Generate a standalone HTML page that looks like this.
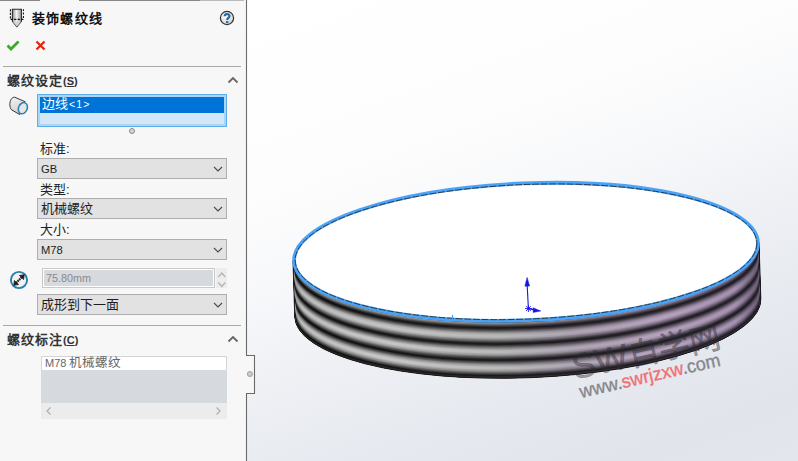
<!DOCTYPE html>
<html lang="zh-CN">
<head>
<meta charset="utf-8">
<style>
*{margin:0;padding:0;box-sizing:border-box}
html,body{width:798px;height:461px;overflow:hidden}
body{position:relative;font-family:"Liberation Sans",sans-serif;background:#f7f7f7}
.abs{position:absolute}
#view{position:absolute;left:247px;top:0;width:551px;height:461px;background:linear-gradient(160deg,#ffffff 0%,#fdfdfd 30%,#f7f8fa 45%,#eff1f5 58%,#e6e9ef 76%,#e1e4eb 90%,#e4e6ed 100%)}
#panel{position:absolute;left:0;top:0;width:247px;height:461px;background:#f7f7f7}
.txt{position:absolute;white-space:nowrap;color:#222;line-height:1}
.sep{position:absolute;height:1px;background:#a9a9a9}
.dd{position:absolute;left:37px;width:190px;height:21px;background:#e2e2e2;border:1px solid #adadad}
.dd .t{position:absolute;left:3px;top:3px;font-size:13px;color:#1e1e1e;line-height:1}
.chev{position:absolute;right:3px;top:7px;width:10px;height:6px}
</style>
</head>
<body>
<div id="view"></div>
<svg class="abs" style="left:247px;top:0" width="551" height="461" viewBox="0 0 551 461">
<defs>
<clipPath id="sc"><path d="M45.98,261.08 A233.2,69.89999999999999 -2.28 0 0 512.02,242.52 L513.82,298.52 A233.2,69.89999999999999 -2.28 0 1 47.78,317.08 Z"/></clipPath>
<linearGradient id="g0" gradientUnits="userSpaceOnUse" x1="45.98" y1="0" x2="512.02" y2="0">
<stop offset="0.000" stop-color="#0a0a0a"/>
<stop offset="0.020" stop-color="#0b0b0b"/>
<stop offset="0.100" stop-color="#0e0e0e"/>
<stop offset="0.200" stop-color="#121212"/>
<stop offset="0.300" stop-color="#161616"/>
<stop offset="0.400" stop-color="#181719"/>
<stop offset="0.450" stop-color="#19181a"/>
<stop offset="0.500" stop-color="#1a181b"/>
<stop offset="0.600" stop-color="#1c191e"/>
<stop offset="0.700" stop-color="#1d1a20"/>
<stop offset="0.800" stop-color="#1e1b21"/>
<stop offset="0.850" stop-color="#1e1b22"/>
<stop offset="0.900" stop-color="#1e1b22"/>
<stop offset="0.950" stop-color="#1e1a22"/>
<stop offset="1.000" stop-color="#1e1a22"/>
</linearGradient>
<linearGradient id="g1" gradientUnits="userSpaceOnUse" x1="45.98" y1="0" x2="512.02" y2="0">
<stop offset="0.000" stop-color="#101010"/>
<stop offset="0.020" stop-color="#121212"/>
<stop offset="0.100" stop-color="#151515"/>
<stop offset="0.200" stop-color="#1a1a1a"/>
<stop offset="0.300" stop-color="#1d1d1d"/>
<stop offset="0.400" stop-color="#1f1e1f"/>
<stop offset="0.450" stop-color="#201e21"/>
<stop offset="0.500" stop-color="#201e22"/>
<stop offset="0.600" stop-color="#221f24"/>
<stop offset="0.700" stop-color="#232026"/>
<stop offset="0.800" stop-color="#242028"/>
<stop offset="0.850" stop-color="#242028"/>
<stop offset="0.900" stop-color="#242028"/>
<stop offset="0.950" stop-color="#241f28"/>
<stop offset="1.000" stop-color="#211d25"/>
</linearGradient>
<linearGradient id="g2" gradientUnits="userSpaceOnUse" x1="45.98" y1="0" x2="512.02" y2="0">
<stop offset="0.000" stop-color="#161616"/>
<stop offset="0.020" stop-color="#1a1a1a"/>
<stop offset="0.100" stop-color="#1d1d1d"/>
<stop offset="0.200" stop-color="#212121"/>
<stop offset="0.300" stop-color="#242424"/>
<stop offset="0.400" stop-color="#262526"/>
<stop offset="0.450" stop-color="#262527"/>
<stop offset="0.500" stop-color="#272528"/>
<stop offset="0.600" stop-color="#28252a"/>
<stop offset="0.700" stop-color="#29252c"/>
<stop offset="0.800" stop-color="#2a262e"/>
<stop offset="0.850" stop-color="#2a262f"/>
<stop offset="0.900" stop-color="#2a252e"/>
<stop offset="0.950" stop-color="#29242e"/>
<stop offset="1.000" stop-color="#242029"/>
</linearGradient>
<linearGradient id="g3" gradientUnits="userSpaceOnUse" x1="45.98" y1="0" x2="512.02" y2="0">
<stop offset="0.000" stop-color="#1c1c1c"/>
<stop offset="0.020" stop-color="#212121"/>
<stop offset="0.100" stop-color="#242424"/>
<stop offset="0.200" stop-color="#282828"/>
<stop offset="0.300" stop-color="#2b2b2b"/>
<stop offset="0.400" stop-color="#2c2c2d"/>
<stop offset="0.450" stop-color="#2d2c2e"/>
<stop offset="0.500" stop-color="#2d2b2f"/>
<stop offset="0.600" stop-color="#2e2a31"/>
<stop offset="0.700" stop-color="#302b33"/>
<stop offset="0.800" stop-color="#312c35"/>
<stop offset="0.850" stop-color="#302b35"/>
<stop offset="0.900" stop-color="#302a34"/>
<stop offset="0.950" stop-color="#2f2934"/>
<stop offset="1.000" stop-color="#27222c"/>
</linearGradient>
<linearGradient id="g4" gradientUnits="userSpaceOnUse" x1="45.98" y1="0" x2="512.02" y2="0">
<stop offset="0.000" stop-color="#212121"/>
<stop offset="0.020" stop-color="#292929"/>
<stop offset="0.100" stop-color="#2c2c2c"/>
<stop offset="0.200" stop-color="#303030"/>
<stop offset="0.300" stop-color="#323232"/>
<stop offset="0.400" stop-color="#333234"/>
<stop offset="0.450" stop-color="#343234"/>
<stop offset="0.500" stop-color="#343235"/>
<stop offset="0.600" stop-color="#343037"/>
<stop offset="0.700" stop-color="#363139"/>
<stop offset="0.800" stop-color="#37313b"/>
<stop offset="0.850" stop-color="#36313b"/>
<stop offset="0.900" stop-color="#352f3a"/>
<stop offset="0.950" stop-color="#342e3a"/>
<stop offset="1.000" stop-color="#2a2530"/>
</linearGradient>
<linearGradient id="g5" gradientUnits="userSpaceOnUse" x1="45.98" y1="0" x2="512.02" y2="0">
<stop offset="0.000" stop-color="#272727"/>
<stop offset="0.020" stop-color="#303030"/>
<stop offset="0.100" stop-color="#333333"/>
<stop offset="0.200" stop-color="#383838"/>
<stop offset="0.300" stop-color="#3a3a3a"/>
<stop offset="0.400" stop-color="#3a393b"/>
<stop offset="0.450" stop-color="#3a393b"/>
<stop offset="0.500" stop-color="#3a383c"/>
<stop offset="0.600" stop-color="#3b363d"/>
<stop offset="0.700" stop-color="#3c3640"/>
<stop offset="0.800" stop-color="#3d3742"/>
<stop offset="0.850" stop-color="#3c3642"/>
<stop offset="0.900" stop-color="#3b3541"/>
<stop offset="0.950" stop-color="#3a3340"/>
<stop offset="1.000" stop-color="#2e2833"/>
</linearGradient>
<linearGradient id="g6" gradientUnits="userSpaceOnUse" x1="45.98" y1="0" x2="512.02" y2="0">
<stop offset="0.000" stop-color="#2d2d2d"/>
<stop offset="0.020" stop-color="#383838"/>
<stop offset="0.100" stop-color="#3b3b3b"/>
<stop offset="0.200" stop-color="#3f3f3f"/>
<stop offset="0.300" stop-color="#414141"/>
<stop offset="0.400" stop-color="#414041"/>
<stop offset="0.450" stop-color="#414042"/>
<stop offset="0.500" stop-color="#413f42"/>
<stop offset="0.600" stop-color="#413c44"/>
<stop offset="0.700" stop-color="#423c46"/>
<stop offset="0.800" stop-color="#443c48"/>
<stop offset="0.850" stop-color="#433b48"/>
<stop offset="0.900" stop-color="#413a47"/>
<stop offset="0.950" stop-color="#403846"/>
<stop offset="1.000" stop-color="#312a36"/>
</linearGradient>
<linearGradient id="g7" gradientUnits="userSpaceOnUse" x1="45.98" y1="0" x2="512.02" y2="0">
<stop offset="0.000" stop-color="#333333"/>
<stop offset="0.020" stop-color="#3f3f3f"/>
<stop offset="0.100" stop-color="#424242"/>
<stop offset="0.200" stop-color="#464646"/>
<stop offset="0.300" stop-color="#484848"/>
<stop offset="0.400" stop-color="#484748"/>
<stop offset="0.450" stop-color="#484748"/>
<stop offset="0.500" stop-color="#474549"/>
<stop offset="0.600" stop-color="#47424a"/>
<stop offset="0.700" stop-color="#48424c"/>
<stop offset="0.800" stop-color="#4a424f"/>
<stop offset="0.850" stop-color="#49414e"/>
<stop offset="0.900" stop-color="#473f4d"/>
<stop offset="0.950" stop-color="#453d4b"/>
<stop offset="1.000" stop-color="#342d3a"/>
</linearGradient>
<linearGradient id="g8" gradientUnits="userSpaceOnUse" x1="45.98" y1="0" x2="512.02" y2="0">
<stop offset="0.000" stop-color="#393939"/>
<stop offset="0.020" stop-color="#474747"/>
<stop offset="0.100" stop-color="#4a4a4a"/>
<stop offset="0.200" stop-color="#4e4e4e"/>
<stop offset="0.300" stop-color="#4f4f4f"/>
<stop offset="0.400" stop-color="#4f4e4f"/>
<stop offset="0.450" stop-color="#4e4d4f"/>
<stop offset="0.500" stop-color="#4e4b4f"/>
<stop offset="0.600" stop-color="#4d4850"/>
<stop offset="0.700" stop-color="#4f4853"/>
<stop offset="0.800" stop-color="#504855"/>
<stop offset="0.850" stop-color="#4f4654"/>
<stop offset="0.900" stop-color="#4d4453"/>
<stop offset="0.950" stop-color="#4b4251"/>
<stop offset="1.000" stop-color="#37303d"/>
</linearGradient>
<linearGradient id="g9" gradientUnits="userSpaceOnUse" x1="45.98" y1="0" x2="512.02" y2="0">
<stop offset="0.000" stop-color="#3e3e3e"/>
<stop offset="0.020" stop-color="#4e4e4e"/>
<stop offset="0.100" stop-color="#515151"/>
<stop offset="0.200" stop-color="#565656"/>
<stop offset="0.300" stop-color="#565656"/>
<stop offset="0.400" stop-color="#555556"/>
<stop offset="0.450" stop-color="#555456"/>
<stop offset="0.500" stop-color="#545256"/>
<stop offset="0.600" stop-color="#534e56"/>
<stop offset="0.700" stop-color="#554d59"/>
<stop offset="0.800" stop-color="#574d5c"/>
<stop offset="0.850" stop-color="#554c5b"/>
<stop offset="0.900" stop-color="#534959"/>
<stop offset="0.950" stop-color="#514757"/>
<stop offset="1.000" stop-color="#3a3340"/>
</linearGradient>
<linearGradient id="g10" gradientUnits="userSpaceOnUse" x1="45.98" y1="0" x2="512.02" y2="0">
<stop offset="0.000" stop-color="#444444"/>
<stop offset="0.020" stop-color="#555555"/>
<stop offset="0.100" stop-color="#595959"/>
<stop offset="0.200" stop-color="#5d5d5d"/>
<stop offset="0.300" stop-color="#5d5d5d"/>
<stop offset="0.400" stop-color="#5c5c5d"/>
<stop offset="0.450" stop-color="#5c5b5c"/>
<stop offset="0.500" stop-color="#5b585c"/>
<stop offset="0.600" stop-color="#59535c"/>
<stop offset="0.700" stop-color="#5b5360"/>
<stop offset="0.800" stop-color="#5d5363"/>
<stop offset="0.850" stop-color="#5b5161"/>
<stop offset="0.900" stop-color="#594f5f"/>
<stop offset="0.950" stop-color="#564c5d"/>
<stop offset="1.000" stop-color="#3d3644"/>
</linearGradient>
<linearGradient id="g11" gradientUnits="userSpaceOnUse" x1="45.98" y1="0" x2="512.02" y2="0">
<stop offset="0.000" stop-color="#4a4a4a"/>
<stop offset="0.020" stop-color="#5d5d5d"/>
<stop offset="0.100" stop-color="#606060"/>
<stop offset="0.200" stop-color="#646464"/>
<stop offset="0.300" stop-color="#646464"/>
<stop offset="0.400" stop-color="#636263"/>
<stop offset="0.450" stop-color="#626263"/>
<stop offset="0.500" stop-color="#615f63"/>
<stop offset="0.600" stop-color="#5f5963"/>
<stop offset="0.700" stop-color="#615966"/>
<stop offset="0.800" stop-color="#635969"/>
<stop offset="0.850" stop-color="#615667"/>
<stop offset="0.900" stop-color="#5e5465"/>
<stop offset="0.950" stop-color="#5c5163"/>
<stop offset="1.000" stop-color="#403847"/>
</linearGradient>
<linearGradient id="g12" gradientUnits="userSpaceOnUse" x1="45.98" y1="0" x2="512.02" y2="0">
<stop offset="0.000" stop-color="#505050"/>
<stop offset="0.020" stop-color="#646464"/>
<stop offset="0.100" stop-color="#686868"/>
<stop offset="0.200" stop-color="#6c6c6c"/>
<stop offset="0.300" stop-color="#6b6b6b"/>
<stop offset="0.400" stop-color="#6a696a"/>
<stop offset="0.450" stop-color="#69686a"/>
<stop offset="0.500" stop-color="#686569"/>
<stop offset="0.600" stop-color="#665f69"/>
<stop offset="0.700" stop-color="#685f6c"/>
<stop offset="0.800" stop-color="#6a5e70"/>
<stop offset="0.850" stop-color="#675c6e"/>
<stop offset="0.900" stop-color="#64596b"/>
<stop offset="0.950" stop-color="#625669"/>
<stop offset="1.000" stop-color="#443b4a"/>
</linearGradient>
<linearGradient id="g13" gradientUnits="userSpaceOnUse" x1="45.98" y1="0" x2="512.02" y2="0">
<stop offset="0.000" stop-color="#565656"/>
<stop offset="0.020" stop-color="#6c6c6c"/>
<stop offset="0.100" stop-color="#6f6f6f"/>
<stop offset="0.200" stop-color="#747474"/>
<stop offset="0.300" stop-color="#737373"/>
<stop offset="0.400" stop-color="#717071"/>
<stop offset="0.450" stop-color="#706f70"/>
<stop offset="0.500" stop-color="#6e6c70"/>
<stop offset="0.600" stop-color="#6c656f"/>
<stop offset="0.700" stop-color="#6e6473"/>
<stop offset="0.800" stop-color="#706476"/>
<stop offset="0.850" stop-color="#6d6174"/>
<stop offset="0.900" stop-color="#6a5e71"/>
<stop offset="0.950" stop-color="#675b6f"/>
<stop offset="1.000" stop-color="#473e4e"/>
</linearGradient>
<linearGradient id="g14" gradientUnits="userSpaceOnUse" x1="45.98" y1="0" x2="512.02" y2="0">
<stop offset="0.000" stop-color="#5c5c5c"/>
<stop offset="0.020" stop-color="#737373"/>
<stop offset="0.100" stop-color="#777777"/>
<stop offset="0.200" stop-color="#7b7b7b"/>
<stop offset="0.300" stop-color="#7a7a7a"/>
<stop offset="0.400" stop-color="#777778"/>
<stop offset="0.450" stop-color="#767677"/>
<stop offset="0.500" stop-color="#757276"/>
<stop offset="0.600" stop-color="#726b76"/>
<stop offset="0.700" stop-color="#746a79"/>
<stop offset="0.800" stop-color="#766a7d"/>
<stop offset="0.850" stop-color="#73677a"/>
<stop offset="0.900" stop-color="#706378"/>
<stop offset="0.950" stop-color="#6d6075"/>
<stop offset="1.000" stop-color="#4a4051"/>
</linearGradient>
<linearGradient id="g15" gradientUnits="userSpaceOnUse" x1="45.98" y1="0" x2="512.02" y2="0">
<stop offset="0.000" stop-color="#626262"/>
<stop offset="0.020" stop-color="#7b7b7b"/>
<stop offset="0.100" stop-color="#7e7e7e"/>
<stop offset="0.200" stop-color="#828282"/>
<stop offset="0.300" stop-color="#818181"/>
<stop offset="0.400" stop-color="#7e7e7f"/>
<stop offset="0.450" stop-color="#7d7c7d"/>
<stop offset="0.500" stop-color="#7b787d"/>
<stop offset="0.600" stop-color="#78707c"/>
<stop offset="0.700" stop-color="#7a707f"/>
<stop offset="0.800" stop-color="#7d6f83"/>
<stop offset="0.850" stop-color="#796c81"/>
<stop offset="0.900" stop-color="#76697e"/>
<stop offset="0.950" stop-color="#72657b"/>
<stop offset="1.000" stop-color="#4d4355"/>
</linearGradient>
<linearGradient id="g16" gradientUnits="userSpaceOnUse" x1="45.98" y1="0" x2="512.02" y2="0">
<stop offset="0.000" stop-color="#676767"/>
<stop offset="0.020" stop-color="#828282"/>
<stop offset="0.100" stop-color="#868686"/>
<stop offset="0.200" stop-color="#8a8a8a"/>
<stop offset="0.300" stop-color="#888888"/>
<stop offset="0.400" stop-color="#858585"/>
<stop offset="0.450" stop-color="#848384"/>
<stop offset="0.500" stop-color="#827f83"/>
<stop offset="0.600" stop-color="#7e7682"/>
<stop offset="0.700" stop-color="#817686"/>
<stop offset="0.800" stop-color="#83758a"/>
<stop offset="0.850" stop-color="#807187"/>
<stop offset="0.900" stop-color="#7c6e84"/>
<stop offset="0.950" stop-color="#786a81"/>
<stop offset="1.000" stop-color="#504658"/>
</linearGradient>
<linearGradient id="g17" gradientUnits="userSpaceOnUse" x1="45.98" y1="0" x2="512.02" y2="0">
<stop offset="0.000" stop-color="#6d6d6d"/>
<stop offset="0.020" stop-color="#8a8a8a"/>
<stop offset="0.100" stop-color="#8d8d8d"/>
<stop offset="0.200" stop-color="#929292"/>
<stop offset="0.300" stop-color="#8f8f8f"/>
<stop offset="0.400" stop-color="#8c8c8c"/>
<stop offset="0.450" stop-color="#8a8a8b"/>
<stop offset="0.500" stop-color="#88858a"/>
<stop offset="0.600" stop-color="#847c88"/>
<stop offset="0.700" stop-color="#877b8c"/>
<stop offset="0.800" stop-color="#8a7b90"/>
<stop offset="0.850" stop-color="#86778d"/>
<stop offset="0.900" stop-color="#82738a"/>
<stop offset="0.950" stop-color="#7e6f87"/>
<stop offset="1.000" stop-color="#53495b"/>
</linearGradient>
<linearGradient id="g18" gradientUnits="userSpaceOnUse" x1="45.98" y1="0" x2="512.02" y2="0">
<stop offset="0.000" stop-color="#737373"/>
<stop offset="0.020" stop-color="#919191"/>
<stop offset="0.100" stop-color="#959595"/>
<stop offset="0.200" stop-color="#999999"/>
<stop offset="0.300" stop-color="#969696"/>
<stop offset="0.400" stop-color="#939293"/>
<stop offset="0.450" stop-color="#919191"/>
<stop offset="0.500" stop-color="#8f8c90"/>
<stop offset="0.600" stop-color="#8a828e"/>
<stop offset="0.700" stop-color="#8d8193"/>
<stop offset="0.800" stop-color="#908097"/>
<stop offset="0.850" stop-color="#8c7c94"/>
<stop offset="0.900" stop-color="#887890"/>
<stop offset="0.950" stop-color="#83748c"/>
<stop offset="1.000" stop-color="#564c5f"/>
</linearGradient>
<linearGradient id="g19" gradientUnits="userSpaceOnUse" x1="45.98" y1="0" x2="512.02" y2="0">
<stop offset="0.000" stop-color="#797979"/>
<stop offset="0.020" stop-color="#999999"/>
<stop offset="0.100" stop-color="#9c9c9c"/>
<stop offset="0.200" stop-color="#a0a0a0"/>
<stop offset="0.300" stop-color="#9d9d9d"/>
<stop offset="0.400" stop-color="#9a999a"/>
<stop offset="0.450" stop-color="#989798"/>
<stop offset="0.500" stop-color="#959297"/>
<stop offset="0.600" stop-color="#908895"/>
<stop offset="0.700" stop-color="#938799"/>
<stop offset="0.800" stop-color="#96869d"/>
<stop offset="0.850" stop-color="#92829a"/>
<stop offset="0.900" stop-color="#8d7d96"/>
<stop offset="0.950" stop-color="#897992"/>
<stop offset="1.000" stop-color="#594e62"/>
</linearGradient>
<linearGradient id="g20" gradientUnits="userSpaceOnUse" x1="45.98" y1="0" x2="512.02" y2="0">
<stop offset="0.000" stop-color="#7f7f7f"/>
<stop offset="0.020" stop-color="#a0a0a0"/>
<stop offset="0.100" stop-color="#a4a4a4"/>
<stop offset="0.200" stop-color="#a8a8a8"/>
<stop offset="0.300" stop-color="#a4a4a4"/>
<stop offset="0.400" stop-color="#a0a0a0"/>
<stop offset="0.450" stop-color="#9e9e9e"/>
<stop offset="0.500" stop-color="#9c999d"/>
<stop offset="0.600" stop-color="#968e9b"/>
<stop offset="0.700" stop-color="#9a8d9f"/>
<stop offset="0.800" stop-color="#9d8ba4"/>
<stop offset="0.850" stop-color="#9887a0"/>
<stop offset="0.900" stop-color="#93839c"/>
<stop offset="0.950" stop-color="#8e7e98"/>
<stop offset="1.000" stop-color="#5c5166"/>
</linearGradient>
<linearGradient id="g21" gradientUnits="userSpaceOnUse" x1="45.98" y1="0" x2="512.02" y2="0">
<stop offset="0.000" stop-color="#848484"/>
<stop offset="0.020" stop-color="#a8a8a8"/>
<stop offset="0.100" stop-color="#ababab"/>
<stop offset="0.200" stop-color="#b0b0b0"/>
<stop offset="0.300" stop-color="#ababab"/>
<stop offset="0.400" stop-color="#a7a7a7"/>
<stop offset="0.450" stop-color="#a5a5a5"/>
<stop offset="0.500" stop-color="#a29fa4"/>
<stop offset="0.600" stop-color="#9d94a1"/>
<stop offset="0.700" stop-color="#a092a6"/>
<stop offset="0.800" stop-color="#a391aa"/>
<stop offset="0.850" stop-color="#9e8ca6"/>
<stop offset="0.900" stop-color="#9988a2"/>
<stop offset="0.950" stop-color="#94839e"/>
<stop offset="1.000" stop-color="#605469"/>
</linearGradient>
<linearGradient id="g22" gradientUnits="userSpaceOnUse" x1="45.98" y1="0" x2="512.02" y2="0">
<stop offset="0.000" stop-color="#8a8a8a"/>
<stop offset="0.020" stop-color="#afafaf"/>
<stop offset="0.100" stop-color="#b3b3b3"/>
<stop offset="0.200" stop-color="#b7b7b7"/>
<stop offset="0.300" stop-color="#b3b3b3"/>
<stop offset="0.400" stop-color="#aeaeae"/>
<stop offset="0.450" stop-color="#acacac"/>
<stop offset="0.500" stop-color="#a9a5aa"/>
<stop offset="0.600" stop-color="#a399a8"/>
<stop offset="0.700" stop-color="#a698ac"/>
<stop offset="0.800" stop-color="#a997b1"/>
<stop offset="0.850" stop-color="#a492ad"/>
<stop offset="0.900" stop-color="#9f8da8"/>
<stop offset="0.950" stop-color="#9a88a4"/>
<stop offset="1.000" stop-color="#63566c"/>
</linearGradient>
<linearGradient id="g23" gradientUnits="userSpaceOnUse" x1="45.98" y1="0" x2="512.02" y2="0">
<stop offset="0.000" stop-color="#909090"/>
<stop offset="0.020" stop-color="#b7b7b7"/>
<stop offset="0.100" stop-color="#bababa"/>
<stop offset="0.200" stop-color="#bebebe"/>
<stop offset="0.300" stop-color="#bababa"/>
<stop offset="0.400" stop-color="#b5b5b5"/>
<stop offset="0.450" stop-color="#b2b2b2"/>
<stop offset="0.500" stop-color="#afacb1"/>
<stop offset="0.600" stop-color="#a99fae"/>
<stop offset="0.700" stop-color="#ac9eb3"/>
<stop offset="0.800" stop-color="#b09cb7"/>
<stop offset="0.850" stop-color="#aa97b3"/>
<stop offset="0.900" stop-color="#a592af"/>
<stop offset="0.950" stop-color="#9f8daa"/>
<stop offset="1.000" stop-color="#665970"/>
</linearGradient>
<linearGradient id="g24" gradientUnits="userSpaceOnUse" x1="45.98" y1="0" x2="512.02" y2="0">
<stop offset="0.000" stop-color="#969696"/>
<stop offset="0.020" stop-color="#bebebe"/>
<stop offset="0.100" stop-color="#c2c2c2"/>
<stop offset="0.200" stop-color="#c6c6c6"/>
<stop offset="0.300" stop-color="#c1c1c1"/>
<stop offset="0.400" stop-color="#bcbcbc"/>
<stop offset="0.450" stop-color="#b9b9b9"/>
<stop offset="0.500" stop-color="#b6b2b7"/>
<stop offset="0.600" stop-color="#afa5b4"/>
<stop offset="0.700" stop-color="#b2a4b9"/>
<stop offset="0.800" stop-color="#b6a2be"/>
<stop offset="0.850" stop-color="#b09db9"/>
<stop offset="0.900" stop-color="#ab97b5"/>
<stop offset="0.950" stop-color="#a592b0"/>
<stop offset="1.000" stop-color="#695c73"/>
</linearGradient>
</defs>
<path d="M45.98,261.08 A233.2,69.89999999999999 -2.28 0 0 512.02,242.52 L513.82,298.52 A233.2,69.89999999999999 -2.28 0 1 47.78,317.08 Z" fill="url(#g0)"/>
<g clip-path="url(#sc)" fill="none">
<path d="M45.92,258.98 A233.2,69.89999999999999 -2.28 0 0 511.95,240.42" stroke="url(#g24)" stroke-width="1.6"/>
<path d="M45.94,259.68 A233.2,69.89999999999999 -2.28 0 0 511.97,241.12" stroke="url(#g24)" stroke-width="1.6"/>
<path d="M45.96,260.38 A233.2,69.89999999999999 -2.28 0 0 511.99,241.82" stroke="url(#g23)" stroke-width="1.6"/>
<path d="M45.98,261.08 A233.2,69.89999999999999 -2.28 0 0 512.02,242.52" stroke="url(#g22)" stroke-width="1.6"/>
<path d="M46.01,261.78 A233.2,69.89999999999999 -2.28 0 0 512.04,243.22" stroke="url(#g20)" stroke-width="1.6"/>
<path d="M46.03,262.48 A233.2,69.89999999999999 -2.28 0 0 512.06,243.92" stroke="url(#g18)" stroke-width="1.6"/>
<path d="M46.05,263.18 A233.2,69.89999999999999 -2.28 0 0 512.08,244.62" stroke="url(#g15)" stroke-width="1.6"/>
<path d="M46.07,263.88 A233.2,69.89999999999999 -2.28 0 0 512.11,245.32" stroke="url(#g12)" stroke-width="1.6"/>
<path d="M46.10,264.58 A233.2,69.89999999999999 -2.28 0 0 512.13,246.02" stroke="url(#g9)" stroke-width="1.6"/>
<path d="M46.12,265.28 A233.2,69.89999999999999 -2.28 0 0 512.15,246.72" stroke="url(#g6)" stroke-width="1.6"/>
<path d="M46.14,265.98 A233.2,69.89999999999999 -2.28 0 0 512.17,247.42" stroke="url(#g3)" stroke-width="1.6"/>
<path d="M46.16,266.68 A233.2,69.89999999999999 -2.28 0 0 512.20,248.12" stroke="url(#g1)" stroke-width="1.6"/>
<path d="M46.19,267.38 A233.2,69.89999999999999 -2.28 0 0 512.22,248.82" stroke="url(#g0)" stroke-width="1.6"/>
<path d="M46.21,268.08 A233.2,69.89999999999999 -2.28 0 0 512.24,249.52" stroke="url(#g2)" stroke-width="1.6"/>
<path d="M46.23,268.78 A233.2,69.89999999999999 -2.28 0 0 512.26,250.22" stroke="url(#g4)" stroke-width="1.6"/>
<path d="M46.25,269.48 A233.2,69.89999999999999 -2.28 0 0 512.29,250.92" stroke="url(#g7)" stroke-width="1.6"/>
<path d="M46.28,270.18 A233.2,69.89999999999999 -2.28 0 0 512.31,251.62" stroke="url(#g10)" stroke-width="1.6"/>
<path d="M46.30,270.88 A233.2,69.89999999999999 -2.28 0 0 512.33,252.32" stroke="url(#g13)" stroke-width="1.6"/>
<path d="M46.32,271.58 A233.2,69.89999999999999 -2.28 0 0 512.35,253.02" stroke="url(#g16)" stroke-width="1.6"/>
<path d="M46.34,272.28 A233.2,69.89999999999999 -2.28 0 0 512.38,253.72" stroke="url(#g19)" stroke-width="1.6"/>
<path d="M46.37,272.98 A233.2,69.89999999999999 -2.28 0 0 512.40,254.42" stroke="url(#g21)" stroke-width="1.6"/>
<path d="M46.39,273.68 A233.2,69.89999999999999 -2.28 0 0 512.42,255.12" stroke="url(#g22)" stroke-width="1.6"/>
<path d="M46.41,274.38 A233.2,69.89999999999999 -2.28 0 0 512.44,255.82" stroke="url(#g23)" stroke-width="1.6"/>
<path d="M46.43,275.08 A233.2,69.89999999999999 -2.28 0 0 512.47,256.52" stroke="url(#g24)" stroke-width="1.6"/>
<path d="M46.46,275.78 A233.2,69.89999999999999 -2.28 0 0 512.49,257.22" stroke="url(#g24)" stroke-width="1.6"/>
<path d="M46.48,276.48 A233.2,69.89999999999999 -2.28 0 0 512.51,257.92" stroke="url(#g23)" stroke-width="1.6"/>
<path d="M46.50,277.18 A233.2,69.89999999999999 -2.28 0 0 512.53,258.62" stroke="url(#g22)" stroke-width="1.6"/>
<path d="M46.52,277.88 A233.2,69.89999999999999 -2.28 0 0 512.56,259.32" stroke="url(#g20)" stroke-width="1.6"/>
<path d="M46.55,278.58 A233.2,69.89999999999999 -2.28 0 0 512.58,260.02" stroke="url(#g17)" stroke-width="1.6"/>
<path d="M46.57,279.28 A233.2,69.89999999999999 -2.28 0 0 512.60,260.72" stroke="url(#g15)" stroke-width="1.6"/>
<path d="M46.59,279.98 A233.2,69.89999999999999 -2.28 0 0 512.62,261.42" stroke="url(#g12)" stroke-width="1.6"/>
<path d="M46.61,280.68 A233.2,69.89999999999999 -2.28 0 0 512.65,262.12" stroke="url(#g9)" stroke-width="1.6"/>
<path d="M46.64,281.38 A233.2,69.89999999999999 -2.28 0 0 512.67,262.82" stroke="url(#g6)" stroke-width="1.6"/>
<path d="M46.66,282.08 A233.2,69.89999999999999 -2.28 0 0 512.69,263.52" stroke="url(#g3)" stroke-width="1.6"/>
<path d="M46.68,282.78 A233.2,69.89999999999999 -2.28 0 0 512.71,264.22" stroke="url(#g1)" stroke-width="1.6"/>
<path d="M46.70,283.48 A233.2,69.89999999999999 -2.28 0 0 512.74,264.92" stroke="url(#g0)" stroke-width="1.6"/>
<path d="M46.73,284.18 A233.2,69.89999999999999 -2.28 0 0 512.76,265.62" stroke="url(#g2)" stroke-width="1.6"/>
<path d="M46.75,284.88 A233.2,69.89999999999999 -2.28 0 0 512.78,266.32" stroke="url(#g5)" stroke-width="1.6"/>
<path d="M46.77,285.58 A233.2,69.89999999999999 -2.28 0 0 512.80,267.02" stroke="url(#g8)" stroke-width="1.6"/>
<path d="M46.79,286.28 A233.2,69.89999999999999 -2.28 0 0 512.83,267.72" stroke="url(#g11)" stroke-width="1.6"/>
<path d="M46.82,286.98 A233.2,69.89999999999999 -2.28 0 0 512.85,268.42" stroke="url(#g14)" stroke-width="1.6"/>
<path d="M46.84,287.68 A233.2,69.89999999999999 -2.28 0 0 512.87,269.12" stroke="url(#g16)" stroke-width="1.6"/>
<path d="M46.86,288.38 A233.2,69.89999999999999 -2.28 0 0 512.89,269.82" stroke="url(#g19)" stroke-width="1.6"/>
<path d="M46.88,289.08 A233.2,69.89999999999999 -2.28 0 0 512.92,270.52" stroke="url(#g21)" stroke-width="1.6"/>
<path d="M46.91,289.78 A233.2,69.89999999999999 -2.28 0 0 512.94,271.22" stroke="url(#g23)" stroke-width="1.6"/>
<path d="M46.93,290.48 A233.2,69.89999999999999 -2.28 0 0 512.96,271.92" stroke="url(#g24)" stroke-width="1.6"/>
<path d="M46.95,291.18 A233.2,69.89999999999999 -2.28 0 0 512.98,272.62" stroke="url(#g24)" stroke-width="1.6"/>
<path d="M46.97,291.88 A233.2,69.89999999999999 -2.28 0 0 513.01,273.32" stroke="url(#g24)" stroke-width="1.6"/>
<path d="M47.00,292.58 A233.2,69.89999999999999 -2.28 0 0 513.03,274.02" stroke="url(#g23)" stroke-width="1.6"/>
<path d="M47.02,293.28 A233.2,69.89999999999999 -2.28 0 0 513.05,274.72" stroke="url(#g21)" stroke-width="1.6"/>
<path d="M47.04,293.98 A233.2,69.89999999999999 -2.28 0 0 513.07,275.42" stroke="url(#g20)" stroke-width="1.6"/>
<path d="M47.06,294.68 A233.2,69.89999999999999 -2.28 0 0 513.10,276.12" stroke="url(#g17)" stroke-width="1.6"/>
<path d="M47.09,295.38 A233.2,69.89999999999999 -2.28 0 0 513.12,276.82" stroke="url(#g14)" stroke-width="1.6"/>
<path d="M47.11,296.08 A233.2,69.89999999999999 -2.28 0 0 513.14,277.52" stroke="url(#g11)" stroke-width="1.6"/>
<path d="M47.13,296.78 A233.2,69.89999999999999 -2.28 0 0 513.16,278.22" stroke="url(#g8)" stroke-width="1.6"/>
<path d="M47.15,297.48 A233.2,69.89999999999999 -2.28 0 0 513.19,278.92" stroke="url(#g5)" stroke-width="1.6"/>
<path d="M47.18,298.18 A233.2,69.89999999999999 -2.28 0 0 513.21,279.62" stroke="url(#g3)" stroke-width="1.6"/>
<path d="M47.20,298.88 A233.2,69.89999999999999 -2.28 0 0 513.23,280.32" stroke="url(#g1)" stroke-width="1.6"/>
<path d="M47.22,299.58 A233.2,69.89999999999999 -2.28 0 0 513.25,281.02" stroke="url(#g0)" stroke-width="1.6"/>
<path d="M47.24,300.28 A233.2,69.89999999999999 -2.28 0 0 513.28,281.72" stroke="url(#g2)" stroke-width="1.6"/>
<path d="M47.27,300.98 A233.2,69.89999999999999 -2.28 0 0 513.30,282.42" stroke="url(#g5)" stroke-width="1.6"/>
<path d="M47.29,301.68 A233.2,69.89999999999999 -2.28 0 0 513.32,283.12" stroke="url(#g8)" stroke-width="1.6"/>
<path d="M47.31,302.38 A233.2,69.89999999999999 -2.28 0 0 513.34,283.82" stroke="url(#g11)" stroke-width="1.6"/>
<path d="M47.33,303.08 A233.2,69.89999999999999 -2.28 0 0 513.37,284.52" stroke="url(#g14)" stroke-width="1.6"/>
<path d="M47.36,303.78 A233.2,69.89999999999999 -2.28 0 0 513.39,285.22" stroke="url(#g17)" stroke-width="1.6"/>
<path d="M47.38,304.48 A233.2,69.89999999999999 -2.28 0 0 513.41,285.92" stroke="url(#g19)" stroke-width="1.6"/>
<path d="M47.40,305.18 A233.2,69.89999999999999 -2.28 0 0 513.43,286.62" stroke="url(#g21)" stroke-width="1.6"/>
<path d="M47.42,305.88 A233.2,69.89999999999999 -2.28 0 0 513.46,287.32" stroke="url(#g23)" stroke-width="1.6"/>
<path d="M47.45,306.58 A233.2,69.89999999999999 -2.28 0 0 513.48,288.02" stroke="url(#g24)" stroke-width="1.6"/>
<path d="M47.47,307.28 A233.2,69.89999999999999 -2.28 0 0 513.50,288.72" stroke="url(#g24)" stroke-width="1.6"/>
<path d="M47.49,307.98 A233.2,69.89999999999999 -2.28 0 0 513.52,289.42" stroke="url(#g24)" stroke-width="1.6"/>
<path d="M47.51,308.68 A233.2,69.89999999999999 -2.28 0 0 513.55,290.12" stroke="url(#g23)" stroke-width="1.6"/>
<path d="M47.54,309.38 A233.2,69.89999999999999 -2.28 0 0 513.57,290.82" stroke="url(#g21)" stroke-width="1.6"/>
<path d="M47.56,310.08 A233.2,69.89999999999999 -2.28 0 0 513.59,291.52" stroke="url(#g19)" stroke-width="1.6"/>
<path d="M47.58,310.78 A233.2,69.89999999999999 -2.28 0 0 513.61,292.22" stroke="url(#g17)" stroke-width="1.6"/>
<path d="M47.60,311.48 A233.2,69.89999999999999 -2.28 0 0 513.64,292.92" stroke="url(#g14)" stroke-width="1.6"/>
<path d="M47.63,312.18 A233.2,69.89999999999999 -2.28 0 0 513.66,293.62" stroke="url(#g11)" stroke-width="1.6"/>
<path d="M47.65,312.88 A233.2,69.89999999999999 -2.28 0 0 513.68,294.32" stroke="url(#g8)" stroke-width="1.6"/>
<path d="M47.67,313.58 A233.2,69.89999999999999 -2.28 0 0 513.70,295.02" stroke="url(#g5)" stroke-width="1.6"/>
<path d="M47.69,314.28 A233.2,69.89999999999999 -2.28 0 0 513.73,295.72" stroke="url(#g2)" stroke-width="1.6"/>
<path d="M47.72,314.98 A233.2,69.89999999999999 -2.28 0 0 513.75,296.42" stroke="url(#g0)" stroke-width="1.6"/>
<path d="M47.74,315.68 A233.2,69.89999999999999 -2.28 0 0 513.77,297.12" stroke="url(#g1)" stroke-width="1.6"/>
<path d="M47.76,316.38 A233.2,69.89999999999999 -2.28 0 0 513.79,297.82" stroke="url(#g3)" stroke-width="1.6"/>
<path d="M47.78,317.08 A233.2,69.89999999999999 -2.28 0 0 513.82,298.52" stroke="url(#g5)" stroke-width="1.6"/>
<path d="M47.81,317.78 A233.2,69.89999999999999 -2.28 0 0 513.84,299.22" stroke="url(#g8)" stroke-width="1.6"/>
<path d="M47.83,318.48 A233.2,69.89999999999999 -2.28 0 0 513.86,299.92" stroke="url(#g11)" stroke-width="1.6"/>
<path d="M47.85,319.18 A233.2,69.89999999999999 -2.28 0 0 513.88,300.62" stroke="url(#g14)" stroke-width="1.6"/>
<path d="M47.87,319.88 A233.2,69.89999999999999 -2.28 0 0 513.91,301.32" stroke="url(#g17)" stroke-width="1.6"/>
</g>
<path d="M45.98,261.08 A233.2,69.89999999999999 -2.28 0 0 512.02,242.52 L513.82,298.52 A233.2,69.89999999999999 -2.28 0 1 47.78,317.08 Z" fill="none" stroke="#111" stroke-width="0.9"/>
<ellipse cx="279.00" cy="251.80" rx="232.1" ry="68.39999999999999" transform="rotate(-2.28 279.00 251.80)" fill="#fff" stroke="#4ba3f7" stroke-width="3.8"/>
<ellipse cx="279.00" cy="251.80" rx="231.0" ry="67.3" transform="rotate(-2.28 279.00 251.80)" fill="none" stroke="#222" stroke-width="0.8" stroke-dasharray="7 1.6"/>
<path d="M205.5,314.8 V319.5" stroke="#4ba3f7" stroke-width="1.2"/>
<g fill="#1515e6" stroke="#1515e6">
<path d="M281.40,308.6 L280.10,284" stroke-width="1.1" fill="none"/>
<path d="M280.10,277.4 L277.90,286.2 L282.60,286 Z" stroke-width="0.5"/>
<path d="M281.40,308.6 L287.10,309.6" stroke-width="1.1" fill="none"/>
<path d="M293.80,311 L286.10,307.8 L286.10,312.4 Z" stroke-width="0.5"/>
<path d="M278.00,308.60 L284.80,308.60" stroke-width="0.9" fill="none"/>
<path d="M279.00,306.20 L283.80,311.00" stroke-width="0.9" fill="none"/>
<path d="M281.40,305.20 L281.40,312.00" stroke-width="0.9" fill="none"/>
<path d="M283.80,306.20 L279.00,311.00" stroke-width="0.9" fill="none"/>
</g>
<g transform="translate(328.0,379.5) rotate(-12.5)" font-family="Liberation Sans, sans-serif">
<text x="0" y="0" font-size="35" fill="#2a2a30" fill-opacity="0.42" stroke="#2a2a30" stroke-opacity="0.42" stroke-width="0.6">SW<tspan font-size="31" dx="1">自学网</tspan></text>
</g>
<g transform="translate(334.0,397.5) rotate(-13)" font-family="Liberation Sans, sans-serif">
<text x="0" y="0.5" font-size="18.5" fill="#86868a" stroke="#86868a" stroke-width="0.35" textLength="144" lengthAdjust="spacingAndGlyphs">www.<tspan fill="#f07074" stroke="#f07074">swrjzxw</tspan>.com</text>
</g>
</svg>
<div id="panel">
  <!-- top tab line -->
  <div class="abs" style="left:0;top:0;width:40px;height:1px;background:#888"></div>
  <div class="abs" style="left:79px;top:0;width:121px;height:1px;background:#888"></div>
  <div class="abs" style="left:200px;top:0;width:44px;height:1px;background:#bababa"></div>

  <!-- title icon -->
  <svg class="abs" style="left:5px;top:5px" width="25" height="25" viewBox="0 0 25 25">
    <defs><linearGradient id="gi" x1="0" x2="1"><stop offset="0" stop-color="#8a8a8a"/><stop offset="0.45" stop-color="#f4f4f4"/><stop offset="1" stop-color="#9a9a9a"/></linearGradient></defs>
    <path d="M7.4,4.2 H16.4 V16.4 L11.9,21.6 L7.4,16.4 Z" fill="url(#gi)" stroke="#2a2a2a" stroke-width="1.1"/>
    <path d="M7.6,16.6 L11.9,21.4 L16.2,16.6 Z" fill="#d4d4d4"/>
    <path d="M5.4,4.2 V14.4 H18.4 V4.2" fill="none" stroke="#111" stroke-width="1.1" stroke-dasharray="2.2 1.3"/>
  </svg>
  <div class="txt" style="left:32px;top:12px;font-size:13px;letter-spacing:1.2px;font-weight:bold;color:#111">装饰螺纹线</div>
  <!-- help -->
  <svg class="abs" style="left:219px;top:10px" width="16" height="16" viewBox="0 0 16 16">
    <defs><radialGradient id="hg" cx="0.4" cy="0.35" r="0.7"><stop offset="0" stop-color="#fff"/><stop offset="1" stop-color="#d0d0d0"/></radialGradient></defs>
    <circle cx="8" cy="8" r="6.6" fill="url(#hg)" stroke="#333" stroke-width="1.2"/>
    <path d="M5.7,6.2 C5.6,3.6 10.5,3.4 10.5,5.9 C10.5,7.9 8.2,7.9 8.2,9.9" fill="none" stroke="#1f6ba6" stroke-width="2.1"/><rect x="7.1" y="11" width="2.2" height="2" fill="#1f6ba6"/>
  </svg>
  <!-- ok / cancel -->
  <svg class="abs" style="left:6px;top:39px" width="14" height="12" viewBox="0 0 14 12">
    <path d="M1.5 6.5 L5 10 L12.5 2.5" fill="none" stroke="#3ea82a" stroke-width="2.8"/>
  </svg>
  <svg class="abs" style="left:35px;top:40px" width="11" height="11" viewBox="0 0 11 11">
    <path d="M1.5 1.5 L9.5 9.5 M9.5 1.5 L1.5 9.5" stroke="#e0280e" stroke-width="2.3"/>
  </svg>

  <div class="sep" style="left:3px;top:66px;width:238px"></div>
  <div class="txt" style="left:7px;top:74px;font-size:13px;letter-spacing:1px;font-weight:bold;color:#333">螺纹设定<span style="font-size:11px;font-weight:bold;letter-spacing:0">(<u>S</u>)</span></div>
  <svg class="abs" style="left:227px;top:76px" width="12" height="8" viewBox="0 0 12 8"><path d="M1.5 6.5 L6 2 L10.5 6.5" fill="none" stroke="#666" stroke-width="1.8"/></svg>

  <!-- edge icon -->
  <svg class="abs" style="left:5px;top:92px" width="28" height="28" viewBox="0 0 28 28">
    <defs><linearGradient id="cg" x1="0" y1="0" x2="0.4" y2="1"><stop offset="0" stop-color="#f4f4f4"/><stop offset="1" stop-color="#cfcfcf"/></linearGradient></defs>
    <path d="M9.7,5.2 L20,9.7 L14.6,22.5 L6.7,17.9 C4.2,15.5 4.4,10 6.2,7.2 C7,6 8.2,5.2 9.7,5.2 Z" fill="url(#cg)" stroke="#222" stroke-width="0.9"/>
    <ellipse cx="17.9" cy="16.2" rx="4.3" ry="5.8" transform="rotate(22 17.9 16.2)" fill="#e6e6e6" stroke="#2a7fb0" stroke-width="1.5"/>
  </svg>
  <!-- selection box -->
  <div class="abs" style="left:37px;top:94px;width:190px;height:33px;background:#5daeea"></div>
  <div class="abs" style="left:38px;top:95px;width:188px;height:31px;background:#acd5f4"></div>
  <div class="abs" style="left:40px;top:97px;width:184px;height:27px;background:#d3e7f9"></div>
  <div class="abs" style="left:40px;top:97px;width:184px;height:16px;background:#0073d8"></div>
  <div class="txt" style="left:42px;top:97px;font-size:13px;color:#fff">边线<span style="font-size:10.5px;letter-spacing:1.2px;margin-left:1px">&lt;1&gt;</span></div>
  <div class="abs" style="left:129px;top:128px;width:6px;height:6px;border-radius:50%;background:#d6d6d6;border:1px solid #8a8a8a"></div>

  <div class="txt" style="left:40px;top:142px;font-size:13px">标准:</div>
  <div class="dd" style="top:158px"><div class="t" style="font-size:11.2px;top:4.5px">GB</div>
    <svg class="chev" viewBox="0 0 10 6"><path d="M1 1 L5 5 L9 1" fill="none" stroke="#4a4a4a" stroke-width="1.1"/></svg></div>
  <div class="txt" style="left:40px;top:183px;font-size:13px">类型:</div>
  <div class="dd" style="top:198px"><div class="t">机械螺纹</div>
    <svg class="chev" viewBox="0 0 10 6"><path d="M1 1 L5 5 L9 1" fill="none" stroke="#4a4a4a" stroke-width="1.1"/></svg></div>
  <div class="txt" style="left:40px;top:223px;font-size:13px">大小:</div>
  <div class="dd" style="top:239px"><div class="t" style="font-size:11.2px;top:4.5px">M78</div>
    <svg class="chev" viewBox="0 0 10 6"><path d="M1 1 L5 5 L9 1" fill="none" stroke="#4a4a4a" stroke-width="1.1"/></svg></div>

  <!-- diameter icon -->
  <svg class="abs" style="left:9px;top:270px" width="20" height="20" viewBox="0 0 20 20">
    <circle cx="10" cy="10" r="8.1" fill="#f2f2f2" stroke="#2b7eab" stroke-width="1.9"/>
    <path d="M7,13 L13,7" stroke="#222" stroke-width="2.2" stroke-dasharray="1.6 0.6"/>
    <path d="M15.2,4.8 L10.4,5.4 L14.6,9.6 Z M4.8,15.2 L5.4,10.4 L9.6,14.6 Z" fill="#222" stroke="#222" stroke-width="0.8" stroke-linejoin="round"/>
  </svg>
  <div class="abs" style="left:42px;top:268px;width:173px;height:20px;background:#d6d9de;border:1px solid #c8c8c8;box-shadow:inset 0 0 0 1px #fff"></div>
  <div class="txt" style="left:46px;top:273px;font-size:10.8px;color:#8a8a8a">75.80mm</div>
  <div class="abs" style="left:216px;top:268px;width:11px;height:20px;background:#ededed"></div>
  <svg class="abs" style="left:216px;top:268px" width="11" height="20" viewBox="0 0 11 20">
    <path d="M2.3 9 L5.8 5 L9.3 9" fill="none" stroke="#b4b4b4" stroke-width="1.4"/>
    <path d="M2.3 14.5 L5.8 18.5 L9.3 14.5" fill="none" stroke="#b4b4b4" stroke-width="1.4"/>
  </svg>
  <div class="dd" style="top:294px"><div class="t">成形到下一面</div>
    <svg class="chev" viewBox="0 0 10 6"><path d="M1 1 L5 5 L9 1" fill="none" stroke="#4a4a4a" stroke-width="1.1"/></svg></div>

  <div class="sep" style="left:3px;top:325px;width:238px"></div>
  <div class="txt" style="left:7px;top:333px;font-size:13px;letter-spacing:1px;font-weight:bold;color:#333">螺纹标注<span style="font-size:11px;font-weight:bold;letter-spacing:0">(<u>C</u>)</span></div>
  <svg class="abs" style="left:227px;top:335px" width="12" height="8" viewBox="0 0 12 8"><path d="M1.5 6.5 L6 2 L10.5 6.5" fill="none" stroke="#666" stroke-width="1.8"/></svg>

  <div class="abs" style="left:41px;top:356px;width:186px;height:47px;background:#d6d9dd"></div>
  <div class="abs" style="left:41px;top:356px;width:186px;height:14px;background:#fff;border:1px solid #d4d4d4;border-bottom:none"></div>
  <div class="txt" style="left:45px;top:357px;font-size:12.5px;color:#666"><span style="font-size:11px">M78 </span>机械螺纹</div>
  <div class="abs" style="left:41px;top:403px;width:186px;height:16px;background:#ececec"></div>
  <svg class="abs" style="left:44px;top:405px" width="10" height="12" viewBox="0 0 10 12"><path d="M6.5 2.5 L3 6 L6.5 9.5" fill="none" stroke="#b0b0b0" stroke-width="1.3"/></svg>
  <svg class="abs" style="left:213px;top:405px" width="10" height="12" viewBox="0 0 10 12"><path d="M3.5 2.5 L7 6 L3.5 9.5" fill="none" stroke="#b0b0b0" stroke-width="1.3"/></svg>
</div>

<!-- panel border with notch -->
<svg class="abs" style="left:240px;top:0" width="20" height="461" viewBox="0 0 20 461">
  <path d="M6.5 0 L6.5 355.5 L14.5 355.5 L14.5 393.5 L6.5 393.5 L6.5 461" fill="#f7f7f7" stroke="#6a6a6a" stroke-width="1.1"/>
  <circle cx="9.9" cy="374" r="2.6" fill="#c8c8c8" stroke="#999" stroke-width="0.8"/>
</svg>

</body>
</html>
